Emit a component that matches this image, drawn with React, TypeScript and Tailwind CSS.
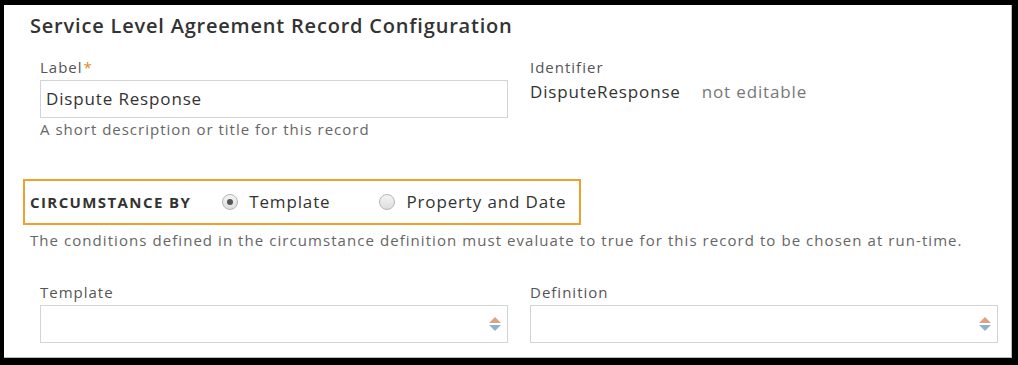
import React from 'react';

const font = { fontFamily: '"Open Sans", "Liberation Sans", sans-serif' };

const Spinner = () => (
  <div className="flex flex-col items-center gap-[2px] mr-[4px]">
    <div className="w-0 h-0 border-l-[6px] border-r-[6px] border-b-[6px] border-l-transparent border-r-transparent border-b-[#e0a27a]" />
    <div className="w-0 h-0 border-l-[6px] border-r-[6px] border-t-[6px] border-l-transparent border-r-transparent border-t-[#8fb3cf]" />
  </div>
);

const SelectBox = ({ label }: { label: string }) => (
  <div className="flex flex-col">
    <div className="text-[15px] text-[#555] leading-[20px] tracking-[1px] mb-[3px]">{label}</div>
    <div className="h-[38px] border border-[#d4d4d4] flex items-center justify-end pr-[2px]">
      <Spinner />
    </div>
  </div>
);

const Radio = ({ checked, label }: { checked?: boolean; label: string }) => (
  <div className="flex items-center gap-[11px]">
    <div className="w-[16px] h-[16px] rounded-full border border-[#b5b5b5] bg-gradient-to-b from-[#f4f4f4] to-[#dedede] flex items-center justify-center">
      {checked && <div className="w-[6px] h-[6px] rounded-full bg-[#555]" />}
    </div>
    <span className="text-[17px] text-[#333] tracking-[0.85px]">{label}</span>
  </div>
);

const App = () => {
  return (
    <div className="w-[1018px] h-[365px] bg-black pl-[4px] pt-[5px] pr-[6px] pb-[7px]" style={font}>
      <div className="w-full h-full bg-white border-r border-b border-[#bbb] flex flex-col">
        <h1 className="text-[20px] font-semibold text-[#333] leading-[28px] tracking-[0.8px] pl-[26px] pt-[7px]">
          Service Level Agreement Record Configuration
        </h1>

        <div className="grid grid-cols-[468px_468px] gap-x-[22px] pl-[36px] mt-[17px]">
          <div className="flex flex-col">
            <div className="text-[15px] text-[#555] leading-[20px] tracking-[1px] mb-[3px]">
              Label<span className="text-[#e08a22] ml-[1px]">*</span>
            </div>
            <div className="h-[38px] border border-[#d4d4d4] flex items-center pl-[5px] text-[17px] text-[#333] tracking-[0.85px]">
              Dispute Response
            </div>
            <div className="text-[15px] text-[#666] leading-[20px] tracking-[1px] mt-[1px]">
              A short description or title for this record
            </div>
          </div>
          <div className="flex flex-col">
            <div className="text-[15px] text-[#555] leading-[20px] tracking-[1px]">Identifier</div>
            <div className="flex items-center gap-[21px] mt-[3px] leading-[24px]">
              <span className="text-[17px] text-[#333] tracking-[0.85px]">DisputeResponse</span>
              <span className="text-[17px] text-[#777] tracking-[0.85px]">not editable</span>
            </div>
          </div>
        </div>

        <div className="ml-[19px] mt-[40px] w-[558px] h-[46px] border-2 border-[#f0a02c] flex items-center pl-[5px]">
          <span className="text-[15px] font-bold text-[#333] tracking-[1.4px] mr-[31px]">CIRCUMSTANCE BY</span>
          <div className="flex items-center gap-[49px]">
            <Radio checked label="Template" />
            <Radio label="Property and Date" />
          </div>
        </div>
        <div className="pl-[26px] mt-[5px] text-[15px] text-[#666] leading-[20px] tracking-[1.06px] whitespace-nowrap">
          The conditions defined in the circumstance definition must evaluate to true for this record to be chosen at run-time.
        </div>

        <div className="grid grid-cols-[468px_468px] gap-x-[22px] pl-[36px] mt-[32px]">
          <SelectBox label="Template" />
          <SelectBox label="Definition" />
        </div>
      </div>
    </div>
  );
};

export default App;
